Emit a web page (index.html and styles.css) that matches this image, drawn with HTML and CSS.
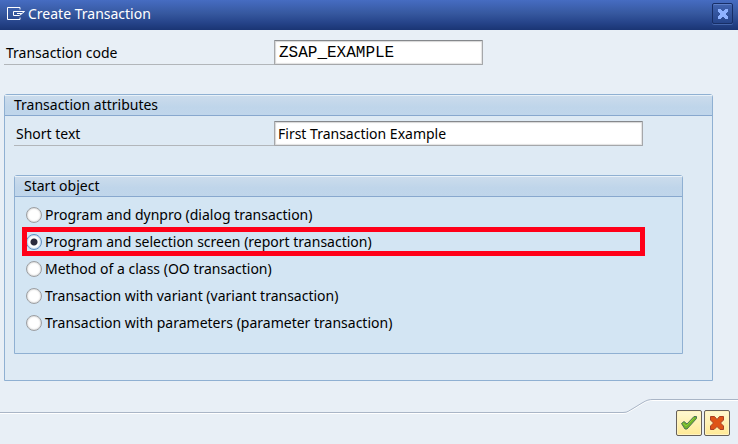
FILE: index.html
```
<!DOCTYPE html>
<html lang="en">
<head>
    <meta charset="UTF-8">
    <meta name="viewport" content="width=device-width, initial-scale=1.0">
    <title>Create Transaction</title>
    <link rel="stylesheet" href="styles.css">
</head>
<body>
    <form class="dialog">
        <!-- title bar -->
        <header class="titlebar">
            <svg class="title-icon" width="18" height="13" viewBox="0 0 18 13" aria-hidden="true">
                <path d="M13 2.5V.5H.5v12H13v-2M17.5 4.5H6.5v4h6l5-4M10 6.5h5" fill="none" stroke="#fff"/>
            </svg>
            <h1 class="title">Create Transaction</h1>
            <button class="close" type="button" aria-label="Close">
                <svg width="10" height="10" viewBox="0 0 10 10" aria-hidden="true">
                    <path d="M0 0h3v1h1v1h2V1h1V0h3v3H9v1H8v2h1v1h1v3H7V9H6V8H4v1H3v1H0V7h1V6h1V4H1V3H0z" fill="#8fb2ff"/>
                </svg>
            </button>
        </header>

        <main class="content">
            <div class="field">
                <label class="field-label" for="tcode">Transaction code</label>
                <input class="field-input code" id="tcode" type="text" value="ZSAP_EXAMPLE">
            </div>

            <section class="group outer">
                <h2 class="group-title">Transaction attributes</h2>
                <div class="field">
                    <label class="field-label" for="stext">Short text</label>
                    <input class="field-input text" id="stext" type="text" value="First Transaction Example">
                </div>

                <section class="group inner">
                    <h2 class="group-title">Start object</h2>
                    <div class="options">
                        <label class="option"><input class="radio" type="radio" name="start">Program and dynpro (dialog transaction)</label>
                        <label class="option marked"><input class="radio" type="radio" name="start" checked>Program and selection screen (report transaction)</label>
                        <label class="option"><input class="radio" type="radio" name="start">Method of a class (OO transaction)</label>
                        <label class="option"><input class="radio" type="radio" name="start">Transaction with variant (variant transaction)</label>
                        <label class="option"><input class="radio" type="radio" name="start">Transaction with parameters (parameter transaction)</label>
                    </div>
                </section>
            </section>
        </main>

        <!-- footer, the line steps up before the buttons -->
        <footer class="footer">
            <div class="line-low"></div>
            <svg class="curve" width="36" height="16" viewBox="0 0 36 16" aria-hidden="true">
                <path d="M0 14.5h1c5 0 6-2 10-4l9-5.500C25 2 27 1.500 31 1.500h5" fill="none" stroke="#fff"/>
                <path d="M0 13.500h1c5 0 6-2 10-4l9-5.500C25 1 27 .5 31 .5h5" fill="none" stroke="#a9b5c6"/>
            </svg>
            <div class="actions">
                <button class="action" type="submit" aria-label="Continue">
                    <svg width="18" height="16" viewBox="0 0 18 16" aria-hidden="true">
                        <path d="M1.500 8.500L4 6.500l3 2.500 7-7.500 2.500 0v2L7 14H5z" fill="#74b52a" stroke="#4c7359"/>
                        <path d="M3 8.500l3 2.500 8-8" fill="none" stroke="#90cf3c"/>
                    </svg>
                </button>
                <button class="action" type="button" aria-label="Cancel">
                    <svg width="16" height="16" viewBox="0 0 16 16" aria-hidden="true">
                        <path d="M1.500 1.500h4L8 4.500l2.500-3h4v3.500L11.500 8l3 3v3.500H11l-3-3-3 3H1.500V11l3-3-3-3z" fill="#df5416" stroke="#a93f26"/>
                    </svg>
                </button>
            </div>
        </footer>
    </form>
</body>
</html>
```
FILE: styles.css
```
*{
    box-sizing: border-box;
}
body{
    margin: 0;
    background-color: #e8eff6;
    color: #000;
    font: 14px/20px "Noto Sans", Tahoma, sans-serif;
}
.dialog{
    display: flex;
    flex-direction: column;
    min-height: 100vh;
}
.titlebar{
    display: flex;
    align-items: center;
    height: 30px;
    padding: 0 5px 3px 7px;
    background: linear-gradient(#466cc2, #36589f 45%, #26448a 75%, #1a3574);
    color: #fff;
}
.title{
    flex: 1;
    margin: 0 0 0 3px;
    font-size: 14px;
    font-weight: normal;
}
.close{
    display: flex;
    align-items: center;
    justify-content: center;
    width: 21px;
    height: 21px;
    padding: 0;
    border: 1px solid #172e66;
    border-radius: 2px;
    background: linear-gradient(#4164b0, #26458b);
    box-shadow: 0 1px #4465ab, inset 0 1px #5d7fc8;
}
.content{
    padding: 10px 25px 18px 4px;
}
.field{
    display: flex;
    height: 25px;
}
.field-label{
    flex: none;
    width: 270px;
    padding: 3px 2px 0;
    border-bottom: 1px solid #b2b6ba;
}
.field-input{
    min-width: 0;
    height: 25px;
    padding: 0 3px;
    border: 1px solid #a5a7aa;
    border-top-color: #85888c;
    border-radius: 1px;
    background-color: #fff;
    box-shadow: inset 1px 1px 1px #d6d6d6, inset -1px -1px 1px #e2e2e2;
    color: #000;
    font: inherit;
}
.field-input.code{
    width: 209px;
    padding-left: 4px;
    font-family: "Liberation Mono", "Courier New", monospace;
    font-size: 16px;
}
.field-input.text{
    width: 369px;
}
.group{
    border: 1px solid #8fb0d2;
    border-radius: 3px 3px 0 0;
}
.group-title{
    height: 21px;
    margin: 0;
    padding: 0 9px;
    border-bottom: 1px solid #88a8ce;
    background: linear-gradient(#ccdcec, #bfd5ea 60%, #c0d6eb);
    box-shadow: inset 0 1px #e8f1f8;
    font-size: 14px;
    font-weight: normal;
}
.outer{
    margin-top: 29px;
    padding-bottom: 26px;
    background-color: #deeaf4;
}
.outer .field{
    margin: 5px 0 0 9px;
}
.outer .field-label{
    width: 260px;
}
.inner{
    margin: 29px 29px 0 9px;
    background-color: #d3e5f3;
}
.options{
    padding: 4px 0 17px 11px;
}
.option{
    display: flex;
    position: relative;
    align-items: center;
    gap: 3px;
    height: 27px;
}
.radio{
    appearance: none;
    width: 16px;
    height: 16px;
    margin: 0;
    border: 1px solid #9b9ea2;
    border-radius: 50%;
    background-color: #fff;
    box-shadow: inset 0 0 2px #a8a8a8;
}
.radio:checked{
    border-color: #5f8fc4;
    background: radial-gradient(circle, #2b2b3d 3px, #fff 4px);
    box-shadow: inset 0 0 2px #6d9bcb;
}
/* red frame round the option to pick */
.marked::after{
    content: "";
    position: absolute;
    inset: -1px 37px -1px -4px;
    border: 5px solid #ff0018;
}
.footer{
    display: flex;
    height: 45px;
    margin-top: auto;
}
.line-low{
    flex: 1;
    height: 14px;
    border-bottom: 1px solid #a9b5c6;
    box-shadow: 0 1px #fff;
}
.curve{
    flex: none;
}
.actions{
    display: flex;
    gap: 2px;
    padding: 10px 8px 0 18px;
    border-top: 1px solid #a9b5c6;
    box-shadow: inset 0 1px #fff;
}
.action{
    display: flex;
    align-items: center;
    justify-content: center;
    width: 26px;
    height: 26px;
    padding: 0;
    border: 1px solid #66605a;
    border-radius: 2px;
    background: linear-gradient(#fff9d2, #ffe995);
    box-shadow: inset 0 0 0 1px #fff3bf;
}
```
